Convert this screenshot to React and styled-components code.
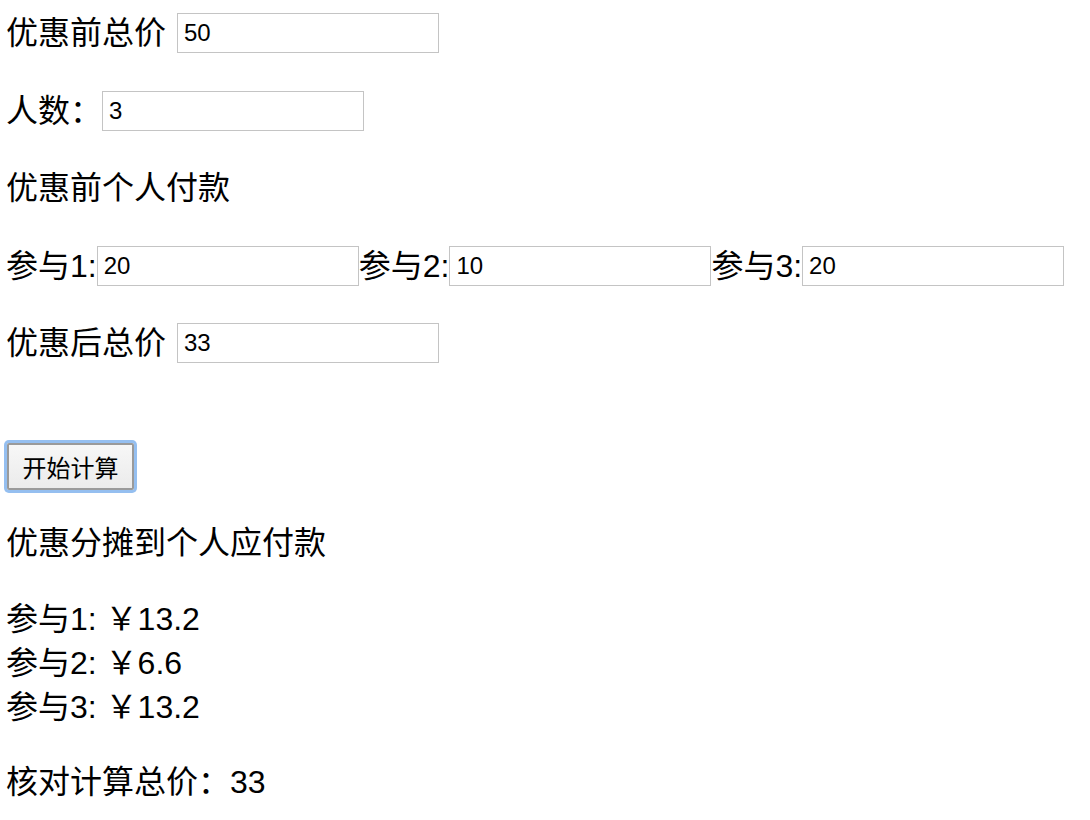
import React from "react";
import styled, { createGlobalStyle } from "styled-components";

const GlobalStyle = createGlobalStyle`
  body {
    margin: 0;
    background: #ffffff;
    color: #000000;
    font-family: "Liberation Sans", "Noto Sans CJK SC", sans-serif;
    font-size: 32px;
    line-height: 44px;
  }
`;

const Page = styled.main`
  display: flex;
  flex-direction: column;
  gap: 31.5px;
  padding: 10px 6px 0;
`;

const Row = styled.div`
  display: flex;
  align-items: center;
  height: ${({ $h }) => $h || 46}px;
`;

const Label = styled.span`
  margin-right: ${({ $gap }) => $gap || 0}px;
  white-space: nowrap;
`;

const Field = styled.input`
  box-sizing: border-box;
  width: 262px;
  height: 40px;
  margin: 0;
  padding: 0 6px;
  border: 1px solid #c4c4c4;
  background: #ffffff;
  font-family: "Liberation Sans", sans-serif;
  font-size: 24px;
  color: #000000;
  outline: none;
`;

const ButtonRow = styled.div`
  display: flex;
  align-items: center;
  height: 47px;
  margin-top: 45px;
`;

const CalcButton = styled.button`
  box-sizing: border-box;
  width: 127px;
  height: 47px;
  margin-left: 1px;
  padding: 0;
  border: 2px solid #9a9a9a;
  border-radius: 2px;
  background: linear-gradient(#f7f7f7, #ebebeb);
  box-shadow: 0 0 0 3px #95bff0;
  font-family: "Liberation Sans", "Noto Sans CJK SC", sans-serif;
  font-size: 24px;
  color: #000000;
`;

const Results = styled.div`
  display: flex;
  flex-direction: column;
`;

const ResultLine = styled.div`
  height: 44px;
  line-height: 44px;
`;

const participants = [20, 10, 20];
const shares = ["13.2", "6.6", "13.2"];

export default function App() {
  return (
    <>
      <GlobalStyle />
      <Page>
        <Row>
          <Label $gap={11}>优惠前总价</Label>
          <Field defaultValue="50" />
        </Row>
        <Row>
          <Label>人数：</Label>
          <Field defaultValue="3" />
        </Row>
        <Row>优惠前个人付款</Row>
        <Row>
          {participants.map((v, i) => (
            <React.Fragment key={i}>
              <Label>参与{i + 1}:</Label>
              <Field defaultValue={v} />
            </React.Fragment>
          ))}
        </Row>
        <Row>
          <Label $gap={11}>优惠后总价</Label>
          <Field defaultValue="33" />
        </Row>
        <ButtonRow>
          <CalcButton type="button">开始计算</CalcButton>
        </ButtonRow>
        <Row $h={44}>优惠分摊到个人应付款</Row>
        <Results>
          {shares.map((s, i) => (
            <ResultLine key={i}>
              参与{i + 1}: ￥{s}
            </ResultLine>
          ))}
        </Results>
        <Row $h={44}>核对计算总价：33</Row>
      </Page>
    </>
  );
}
